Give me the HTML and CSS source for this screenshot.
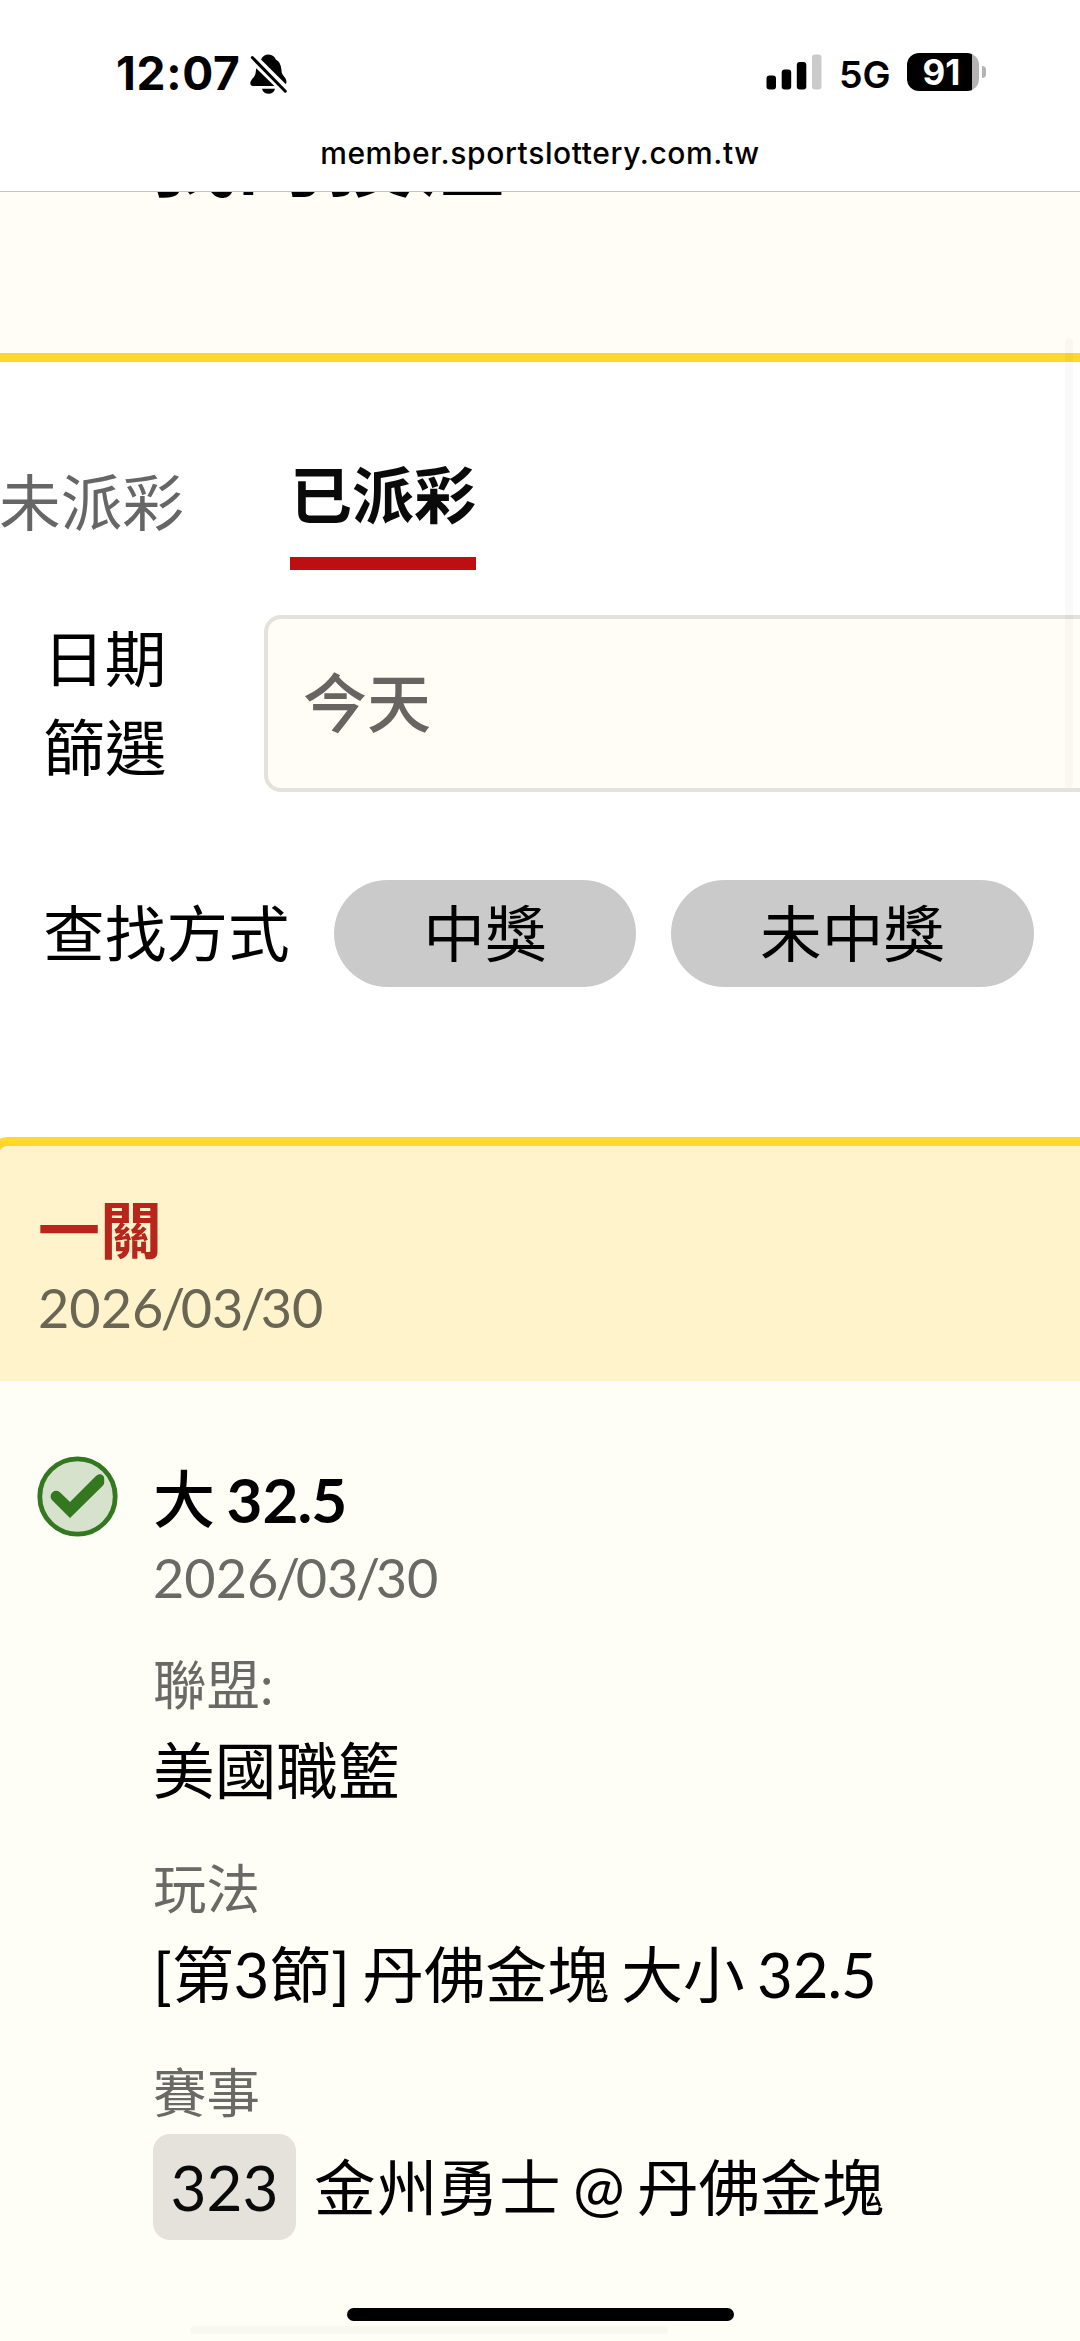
FILE: index.html
```html
<!DOCTYPE html>
<html lang="zh-Hant">
<head>
<meta charset="utf-8">
<title>我的投注</title>
<link rel="stylesheet" href="styles.css">
</head>
<body>
<div class="screen">
  <header class="browser-bar">
    <div class="status">
      <div class="status-left">
        <span class="clock">12:07</span>
        <svg class="bell" viewBox="0 0 37 40" width="37" height="40">
          <path d="M11 5.500C12.800 2.300 15 .6 18.500.6c3.700 0 6.300 2.200 7.300 4.800 4.200 2.200 5.500 6.600 5.900 12.600.3 3.600 4.800 5.600 4.800 10 0 .9-.3 1.700-.9 2.100L11 5.500z"/>
          <path d="M6.200 14.200 24.400 32H3.200C1.300 32 .3 30.900.3 29.300c0-4 4.800-5.700 5.300-10.300z"/>
          <path d="M12 34.700h13c-.7 3.300-3.300 5-6.500 5s-5.800-1.700-6.500-5z"/>
          <path class="slash" d="M2.300 3.500 35.300 37.200"/>
        </svg>
      </div>
      <div class="status-right">
        <svg class="signal" viewBox="0 0 56 36" width="56" height="36">
          <rect x=".5" y="21.500" width="9.500" height="14" rx="3"/>
          <rect x="15.700" y="15.500" width="9.500" height="20" rx="3"/>
          <rect x="30.800" y="8" width="9.500" height="27.500" rx="3"/>
          <rect x="46" y=".5" width="9.500" height="35" rx="3" fill="#cbcbcb"/>
        </svg>
        <span class="network">5G</span>
        <div class="battery"><span class="battery-level">91</span></div>
        <span class="battery-tip"></span>
      </div>
    </div>
    <div class="address">member.sportslottery.com.tw</div>
  </header>

  <section class="hero"><h1 class="hero-title">我的投注</h1></section>

  <nav class="tabs">
    <a class="tab">未派彩</a>
    <a class="tab tab-active">已派彩</a>
  </nav>

  <section class="filter">
    <label class="filter-label">日期<br>篩選</label>
    <div class="select">今天</div>
  </section>

  <section class="lookup">
    <span class="lookup-label">查找方式</span>
    <button class="pill pill-win">中獎</button>
    <button class="pill pill-lose">未中獎</button>
  </section>

  <article class="card">
    <header class="card-head">
      <h2 class="card-title">一關</h2>
      <p class="date">2026<span class="slash-sep">/</span>03<span class="slash-sep">/</span>30</p>
    </header>
    <div class="card-body">
      <svg class="check" viewBox="0 0 81 81" width="81" height="81">
        <circle cx="40.500" cy="40.500" r="37.700" fill="#d7e2cc" stroke="#33771f" stroke-width="4.800"/>
        <path d="M15.600 36.200a5.600 5.600 0 0 1 7.600.2L33 46 59.200 19.800c3.200-3.200 8-1.200 8 2.600v4.200c0 1.200-.5 2-1.200 2.800L33 62 15.200 44.200c-2.200-2.200-2-6 .4-8z" fill="#33771f"/>
      </svg>
      <div class="bet">
        <h3 class="bet-title"><span class="bet-side">大</span> 32<span class="point">.</span>5</h3>
        <p class="date">2026<span class="slash-sep">/</span>03<span class="slash-sep">/</span>30</p>
        <dl class="facts">
          <div class="fact"><dt>聯盟:</dt><dd>美國職籃</dd></div>
          <div class="fact"><dt>玩法</dt><dd>[第3節] 丹佛金塊 大小 32<span class="point">.</span>5</dd></div>
          <div class="fact"><dt>賽事</dt><dd class="match"><span class="match-no">323</span><span>金州勇士 @ 丹佛金塊</span></dd></div>
        </dl>
      </div>
    </div>
  </article>

  <span class="scroll-y"></span>
  <span class="scroll-x"></span>
  <span class="home-indicator"></span>
</div>
</body>
</html>
```

FILE: styles.css
```css
* { box-sizing: border-box; }

body,
h1, h2, h3, p, dl, dd { margin: 0; }

body {
  background: #fff;
  color: #000;
  font-family: Lato, "Noto Sans CJK TC", sans-serif;
  font-size: 61.700px;
  line-height: 90px;
  word-spacing: -3.500px;
}

.screen {
  position: relative;
  display: flex;
  flex-direction: column;
  width: 1080px;
  height: 2341px;
  overflow: hidden;
}

/* Browser chrome */
.browser-bar {
  flex: none;
  height: 192px;
  border-bottom: 1px solid #c2c2c2;
  font-family: Inter, sans-serif;
}

.status {
  display: flex;
  justify-content: space-between;
  height: 135px;
  padding: 53px 94px 0 116px;
}

.status-left,
.status-right { display: flex; align-items: flex-start; }

.clock {
  width: 134px;
  font-size: 46px;
  font-weight: 700;
  line-height: 40px;
  letter-spacing: .700px;
}

.bell .slash { fill: none; stroke: #000; stroke-width: 3; stroke-linecap: round; }
.bell { margin-top: 1px; }
.signal { margin-top: 1px; }

.network {
  width: 67px;
  padding-left: 17px;
  font-size: 37.500px;
  font-weight: 600;
  line-height: 43px;
}

.battery {
  width: 72px;
  height: 38px;
  margin-left: 18px;
  border-radius: 12px;
  background: linear-gradient(90deg, #000 65px, #b3b3b3 65px);
  color: #fff;
}

.battery-level {
  display: block;
  width: 69px;
  font-size: 35px;
  font-weight: 700;
  line-height: 39px;
  text-align: center;
}

.battery-tip {
  width: 4px;
  height: 12px;
  margin: 13px 0 0 3px;
  border-radius: 0 4px 4px 0;
  background: #b3b3b3;
}

.address {
  font-size: 30px;
  font-weight: 500;
  line-height: 36px;
  letter-spacing: .600px;
  text-align: center;
}

/* Page heading */
.hero {
  flex: none;
  height: 170px;
  overflow: hidden;
  border-bottom: 9px solid #ffd829;
  background: #fffdf5;
}

.hero-title {
  margin: -87px 0 0 148px;
  font-size: 89px;
  line-height: 100px;
}

/* Tabs */
.tabs {
  display: flex;
  align-items: flex-start;
  gap: 106px;
  margin-left: -1px;
  padding-top: 88px;
}

.tab { padding-top: 7px; color: #666; }

.tab-active {
  width: 186px;
  padding: 0 0 17px;
  border-bottom: 13px solid #bd0f11;
  color: #0a0a0a;
  font-size: 62px;
  font-weight: 700;
}

/* Filters */
.filter {
  display: flex;
  align-items: flex-start;
  margin-top: 45px;
  padding-left: 43px;
}

.filter-label {
  flex: none;
  width: 221px;
  height: 178px;
  margin: -1px 0 -1px;
  line-height: 89px;
}

.select {
  flex: none;
  width: 900px;
  height: 177px;
  padding: 39px 35px;
  border: 4px solid #e5e2dc;
  border-radius: 17px;
  background: #fffdf5;
  color: #666561;
  font-size: 64px;
  font-weight: 500;
}

.lookup {
  display: flex;
  align-items: center;
  height: 107px;
  margin-top: 88px;
  padding-left: 43px;
}

.lookup-label { width: 291px; margin-top: -2px; }

.pill {
  height: 107px;
  padding: 0 0 1px;
  border: 0;
  border-radius: 54px;
  background: #cacaca;
  color: #000;
  font: inherit;
}

.pill-win { width: 302px; margin-right: 35px; }
.pill-lose { width: 363px; }

/* Ticket card */
.card {
  flex: none;
  width: 1120px;
  height: 1260px;
  margin: 150px 0 0 -10px;
  overflow: hidden;
  border: 9px solid #ffd829;
  border-radius: 18px;
  background: #fffef6;
}

.card-head {
  padding: 39px 39px 43px;
  background: #fff3cc;
}

.card-title {
  color: #b8251b;
  font-size: 62px;
  font-weight: 700;
}

.date {
  margin-top: 3px;
  color: #696966;
  font-size: 54px;
  line-height: 60px;
}

.slash-sep { margin: 0 -4.500px 0 -2.500px; }
.point { margin: 0 -1px; }

.card-head .date { color: #6a6653; }

.card-body {
  display: flex;
  gap: 35px;
  padding: 73px 39px 0 38px;
}

.check { flex: none; margin-top: 2px; }

.bet-title { font-size: 62px; font-weight: 700; }
.bet-side { font-weight: 500; }

.bet .date { margin-top: 4px; }

.fact { padding-top: 43px; }
.fact:first-child { padding-top: 46px; }

.fact dt {
  color: #696966;
  font-size: 53.500px;
  line-height: 60px;
}

.fact dd { margin-top: 11px; }

.fact .match {
  display: flex;
  align-items: center;
  gap: 18px;
  margin-top: 12px;
}

.match-no {
  width: 143px;
  border-radius: 17px;
  background: #e5e2dc;
  color: #0a0a0a;
  font-size: 62px;
  line-height: 106px;
  text-align: center;
}

/* Overlays */
.scroll-y,
.scroll-x,
.home-indicator { position: absolute; border-radius: 7px; }

.scroll-y {
  top: 338px;
  left: 1065px;
  width: 8px;
  height: 450px;
  background: rgba(0, 0, 20, .025);
}

.scroll-x {
  top: 2326px;
  left: 190px;
  width: 478px;
  height: 8px;
  background: rgba(0, 0, 20, .025);
}

.home-indicator {
  top: 2308px;
  left: 347px;
  width: 387px;
  height: 13px;
  background: #000;
}
```
